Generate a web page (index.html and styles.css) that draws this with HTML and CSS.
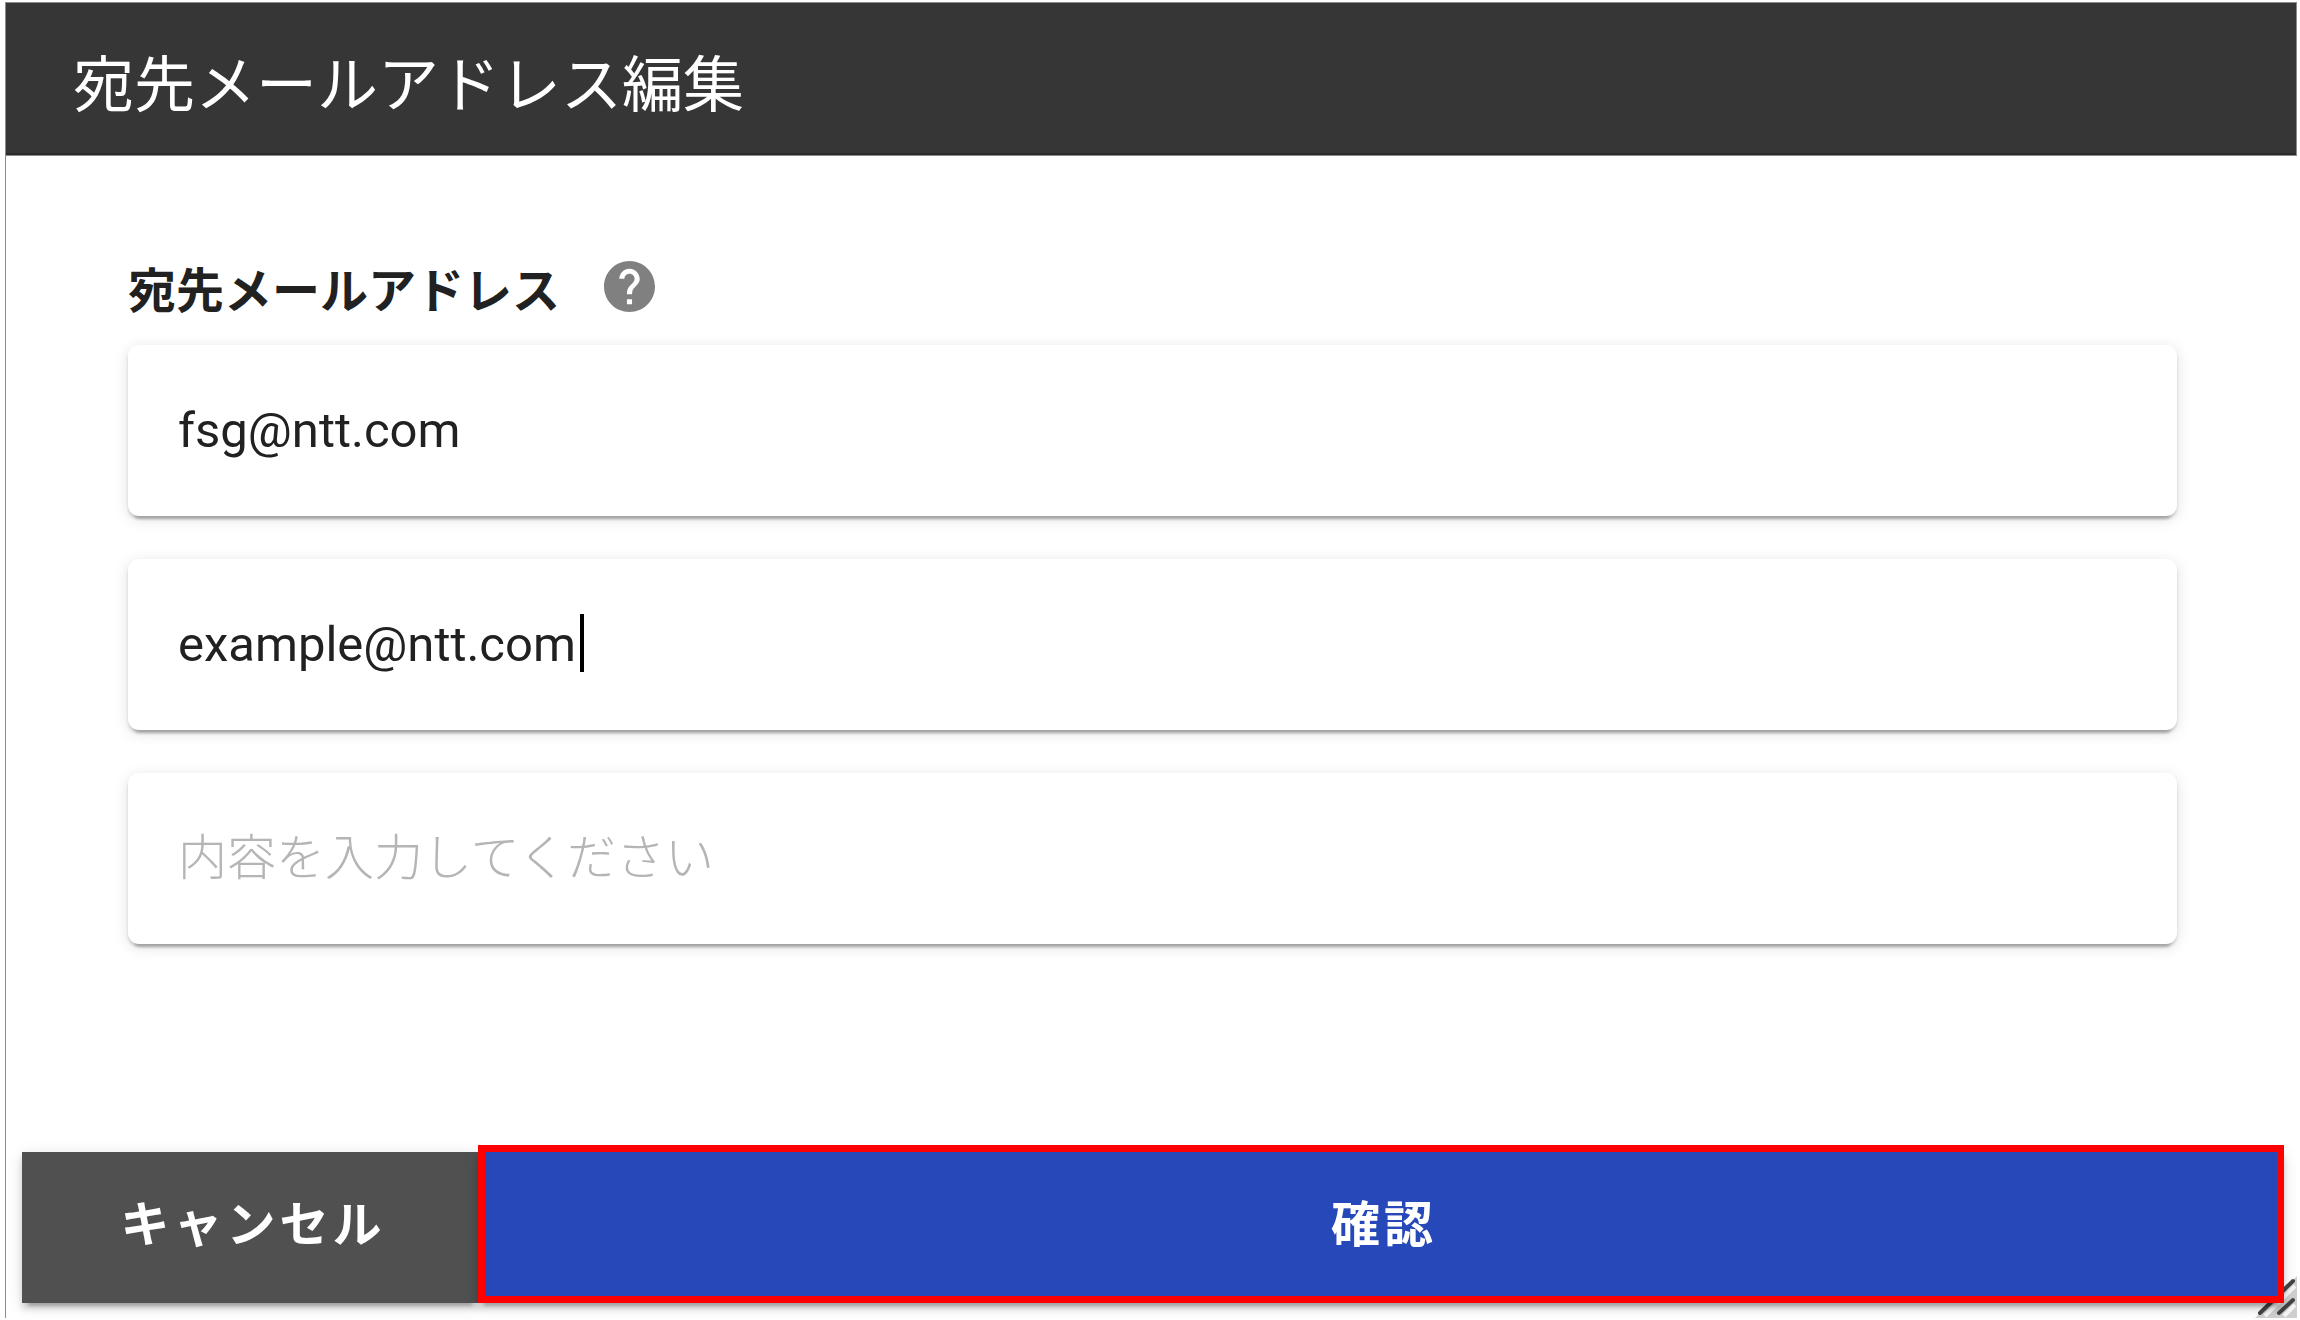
FILE: index.html
```
<!DOCTYPE html>
<html lang="ja">
<head>
    <meta charset="UTF-8">
    <meta name="viewport" content="width=device-width, initial-scale=1.0">
    <title>宛先メールアドレス編集</title>
    <link rel="stylesheet" href="styles.css">
</head>
<body>
    <form class="dialog">
        <header class="dialog-header">
            <h1 class="dialog-title">宛先メールアドレス編集</h1>
        </header>

        <main class="dialog-content">
            <div class="label-row">
                <label class="field-label" for="mail-1">宛先メールアドレス</label>
                <button class="help-button" type="button" aria-label="ヘルプ">
                    <svg class="help-icon" viewBox="2 2 20 20" aria-hidden="true">
                        <path d="M12 2C6.48 2 2 6.48 2 12s4.48 10 10 10 10-4.48 10-10S17.52 2 12 2zm1 17h-2v-2h2v2zm2.07-7.75l-.9.92C13.45 12.9 13 13.5 13 15h-2v-.5c0-1.1.45-2.1 1.17-2.83l1.24-1.26c.37-.36.59-.86.59-1.41 0-1.1-.9-2-2-2s-2 .9-2 2H8c0-2.21 1.79-4 4-4s4 1.79 4 4c0 .88-.36 1.68-.93 2.25z"/>
                    </svg>
                </button>
            </div>

            <div class="field">
                <input class="field-input" id="mail-1" name="mail" type="text" value="fsg@ntt.com">
            </div>
            <div class="field">
                <input class="field-input" name="mail" type="text" value="example@ntt.com" aria-label="宛先メールアドレス 2">
                <span class="caret"></span>
            </div>
            <div class="field">
                <input class="field-input" name="mail" type="text" placeholder="内容を入力してください" aria-label="宛先メールアドレス 3">
            </div>
        </main>

        <footer class="dialog-actions">
            <button class="button button-cancel" type="button">キャンセル</button>
            <button class="button button-confirm" type="submit">確認</button>
        </footer>

        <svg class="resizer" viewBox="0 0 42 42" aria-hidden="true">
            <path d="M0 42L42 0v42z" fill="#cfcfcf"/>
            <path d="M10 40L40 10M29 40L40 29" stroke="#f5f5f5" stroke-width="4"/>
            <path d="M5 37L38 5M24 37L38 24" stroke="#444" stroke-width="4" stroke-linecap="round"/>
        </svg>
    </form>
</body>
</html>
```
FILE: styles.css
```
* {
    box-sizing: border-box;
}

body {
    margin: 0;
    padding: 2px 3px 2px 5px;
    background-color: #ffffff;
    color: #212121;
    font-family: Roboto, "Noto Sans CJK JP", sans-serif;
}

.dialog {
    position: relative;
    display: flex;
    flex-direction: column;
    min-height: calc(100vh - 4px);
    border-left: 1px solid #8c8c8c;
}

.dialog-header {
    padding: 47px 67px 33px;
    border: 1px solid #8c8c8c;
    border-left: none;
    background-color: #363636;
    box-shadow: inset 0 -2px #2a2a2a;
}

.dialog-title {
    margin: 0;
    color: #ffffff;
    font-size: 61px;
    font-weight: 400;
    line-height: 72px;
}

.dialog-content {
    flex: 1;
    padding: 104px 120px 0 122px;
}

.label-row {
    display: flex;
    align-items: center;
    gap: 44px;
    margin-bottom: 21px;
}

.field-label {
    font-size: 48px;
    font-weight: 700;
    line-height: 64px;
}

.help-button {
    padding: 0 0 12px;
    border: none;
    background: none;
}

.help-icon {
    display: block;
    width: 51px;
    height: 51px;
    fill: #808080;
}

.field {
    position: relative;
    margin-bottom: 43px;
}

.field-input {
    display: block;
    width: 100%;
    height: 171px;
    padding: 0 50px;
    border: none;
    border-radius: 11px;
    outline: none;
    background-color: #ffffff;
    color: #212121;
    font-family: inherit;
    font-size: 49px;
    box-shadow: 0 9px 3px -6px rgba(0, 0, 0, 0.2), 0 3px 3px rgba(0, 0, 0, 0.14), 0 3px 15px rgba(0, 0, 0, 0.12);
}

.field-input::placeholder {
    color: #b5b5b5;
    font-weight: 300;
}

/* text cursor at the end of the second address */
.caret {
    position: absolute;
    top: 55px;
    left: 452px;
    width: 4px;
    height: 58px;
    background-color: #000000;
}

.dialog-actions {
    display: flex;
    margin: 0 13px 15px 16px;
}

.button {
    height: 151px;
    padding: 0 0 14px 6px;
    border: none;
    color: #ffffff;
    font-family: inherit;
    font-size: 49px;
    font-weight: 700;
    letter-spacing: 4px;
    box-shadow: 0 9px 3px -6px rgba(0, 0, 0, 0.2), 0 6px 6px rgba(0, 0, 0, 0.14), 0 3px 15px rgba(0, 0, 0, 0.12);
}

.button-cancel {
    flex: 0 0 456px;
    background-color: #505050;
}

.button-confirm {
    position: relative;
    flex: 1;
    background-color: #2648b8;
}

/* red frame round the confirm button */
.button-confirm::after {
    content: "";
    position: absolute;
    inset: -7px 0 0 0;
    border: 7px solid #ff0000;
}

.resizer {
    position: absolute;
    right: 0;
    bottom: 0;
    z-index: -1;
    width: 42px;
    height: 42px;
}
```
